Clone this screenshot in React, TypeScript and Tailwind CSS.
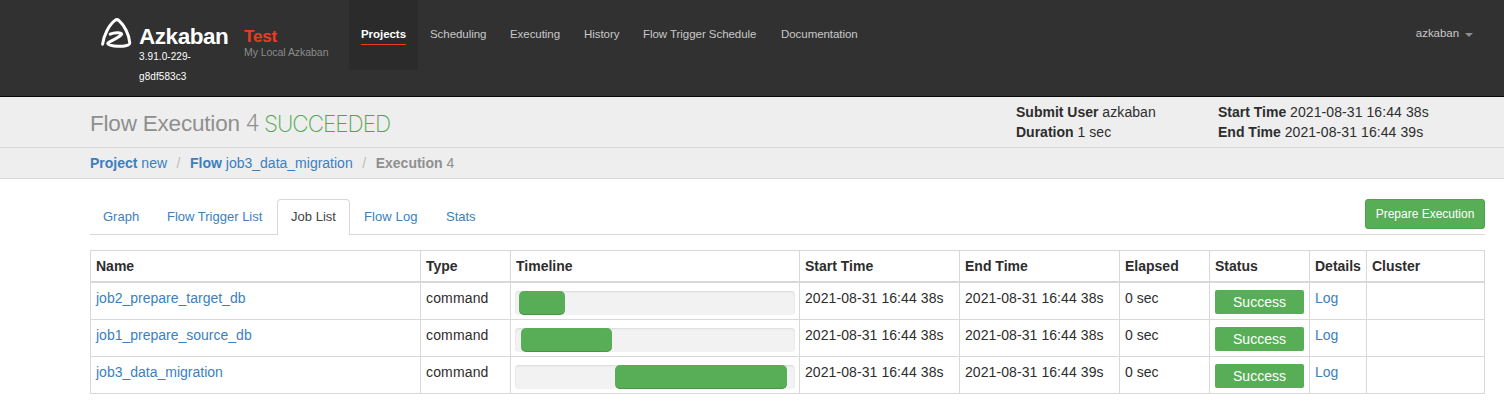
import React from 'react';

const columns = 'grid grid-cols-[330px_90px_289px_160px_160px_90px_100px_57px_118px]';
const cell = 'border-r border-b border-[#d8d8d8] px-[5px] whitespace-nowrap';

const navItems = [
  { label: 'Scheduling', width: 'w-[80px]' },
  { label: 'Executing', width: 'w-[74px]' },
  { label: 'History', width: 'w-[59px]' },
  { label: 'Flow Trigger Schedule', width: 'w-[138px]' },
  { label: 'Documentation', width: 'w-[100px]' },
];

const headings = ['Name', 'Type', 'Timeline', 'Start Time', 'End Time', 'Elapsed', 'Status', 'Details', 'Cluster'];

const jobs = [
  { name: 'job2_prepare_target_db', end: '2021-08-31 16:44 38s', offset: 4, width: 46 },
  { name: 'job1_prepare_source_db', end: '2021-08-31 16:44 38s', offset: 6, width: 91 },
  { name: 'job3_data_migration', end: '2021-08-31 16:44 39s', offset: 100, width: 172 },
];

function Logo() {
  return (
    <svg className="h-[34px] w-[36px] shrink-0" viewBox="99 15 36 34" fill="none" stroke="#fff" strokeLinecap="round" strokeLinejoin="round">
      <path
        d="M102.6 44.2C103.6 35.5 109 24.8 115 20.4Q117 18.8 119 20.6C124 25 129.3 34.5 129.8 43C129.7 45.6 123 46.5 118 46.3C113 46.1 107.6 45 107.8 43.2C108.6 41.2 120 38 121.6 34.2C121.4 32.2 114 32.6 110.2 34.2"
        strokeWidth="3"
      />
    </svg>
  );
}

function Navbar() {
  return (
    <nav className="flex h-[97px] border-b border-[#080808] bg-[#313131] pl-[99px] pr-[31px] text-[11.5px] tracking-[-0.05px] text-[#c8c8c8]">
      <div className="w-[39px] pt-[15px]">
        <Logo />
      </div>
      <div className="w-[106px] pt-[22px] text-white">
        <div className="pl-[1px] text-[22.5px] leading-[30px] font-bold tracking-[-0.45px]">Azkaban</div>
        <div className="-mt-[5px] w-[60px] pl-[1px] text-[10px] leading-[20px] tracking-[0.08px]">3.91.0-229-g8df583c3</div>
      </div>
      <div className="w-[105px] pt-[28px]">
        <div className="text-[17px] leading-[18px] font-bold tracking-[-0.2px] text-[#f03a20]">Test</div>
        <div className="text-[10.5px] leading-[13px] whitespace-nowrap text-[#8c8c8c]">My Local Azkaban</div>
      </div>
      <div className="h-[70px] w-[69px] bg-[#2b2b2b] pt-[25px] pl-[12px]">
        <span className="inline-block border-b border-[#f03a20] leading-[19px] font-bold text-white">Projects</span>
      </div>
      <div className="flex pt-[25px] pl-[12px] leading-[18px]">
        {navItems.map((item) => (
          <a key={item.label} className={`${item.width} whitespace-nowrap`}>
            {item.label}
          </a>
        ))}
      </div>
      <div className="mt-[25px] ml-auto flex h-[18px] items-center gap-[6px]">
        <span>azkaban</span>
        <span className="mt-[2px] border-x-4 border-t-4 border-x-transparent border-t-[#8c8c8c]" />
      </div>
    </nav>
  );
}

function Fact({ label, value }: { label: string; value: string }) {
  return (
    <div className="whitespace-nowrap">
      <b>{label}</b> <span className="tracking-[0.08px]">{value}</span>
    </div>
  );
}

function Header() {
  return (
    <header className="flex h-[51px] border-b border-[#d8d8d8] bg-[#eee] pl-[90px]">
      <h1 className="flex w-[926px] pt-[12px] text-[22.5px] leading-[30px] whitespace-nowrap text-[#8f8f8f]">
        <span className="w-[156px] tracking-[-0.2px]">Flow Execution</span>
        <span className="w-[18px] font-['Roboto'] text-[23px] font-light">4</span>
        <span className="font-['Inter'] font-extralight tracking-[-1px] text-[#4aa84a]">SUCCEEDED</span>
      </h1>
      <div className="w-[202px] pt-[5px] leading-[20px]">
        <Fact label="Submit User" value="azkaban" />
        <Fact label="Duration" value="1 sec" />
      </div>
      <div className="pt-[5px] leading-[20px]">
        <Fact label="Start Time" value="2021-08-31 16:44 38s" />
        <Fact label="End Time" value="2021-08-31 16:44 39s" />
      </div>
    </header>
  );
}

function Breadcrumb() {
  return (
    <div className="flex h-[31px] border-b border-[#d8d8d8] bg-[#eee] pl-[90px] leading-[30px] whitespace-nowrap text-[#3b7fc0]">
      <span><b>Project</b> new</span>
      <span className="w-[23px] text-center text-[#bbb]">/</span>
      <span><b>Flow</b> job3_data_migration</span>
      <span className="w-[23px] text-center text-[#bbb]">/</span>
      <span className="text-[#8f8f8f]"><b>Execution</b> 4</span>
    </div>
  );
}

function Tabs() {
  return (
    <div className="flex h-[36px] items-start border-b border-[#d8d8d8] text-[13px] leading-[35px] whitespace-nowrap text-[#3b7fc0]">
      <a className="w-[64px] pl-[13px]">Graph</a>
      <a className="w-[123px] pl-[13px]">Flow Trigger List</a>
      <a className="h-[36px] w-[73px] rounded-t-[4px] border border-b-0 border-[#d8d8d8] bg-white text-center leading-[34px] text-[#444]">Job List</a>
      <a className="w-[82px] pl-[14px] tracking-[0.1px]">Flow Log</a>
      <a className="pl-[14px]">Stats</a>
      <button className="ml-auto h-[30px] w-[120px] rounded-[3px] border border-[#4ba04b] bg-[#57ae57] text-[12px] leading-[28px] text-white">
        Prepare Execution
      </button>
    </div>
  );
}

function JobTable() {
  return (
    <div className="mt-[15px] border-t border-l border-[#d8d8d8]">
      <div className={`${columns} h-[32px] leading-[30px] font-bold`}>
        {headings.map((heading) => (
          <div key={heading} className="border-r border-b-2 border-[#d8d8d8] px-[5px] whitespace-nowrap">
            {heading}
          </div>
        ))}
      </div>
      {jobs.map((job) => (
        <div key={job.name} className={`${columns} h-[37px] leading-[31px]`}>
          <div className={`${cell} text-[#3b7fc0]`}>{job.name}</div>
          <div className={`${cell} tracking-[0.15px]`}>command</div>
          <div className="border-r border-b border-[#d8d8d8] px-[4px] pt-[8px]">
            <div className="h-[24px] rounded-[4px] bg-[#f2f2f2] shadow-[inset_0_1px_2px_rgba(0,0,0,0.1)]">
              <div
                className="h-[24px] rounded-[5px] bg-[#57ae57] shadow-[inset_0_-1px_0_rgba(0,0,0,0.15)]"
                style={{ marginLeft: job.offset, width: job.width }}
              />
            </div>
          </div>
          <div className={`${cell} tracking-[0.08px]`}>2021-08-31 16:44 38s</div>
          <div className={`${cell} tracking-[0.08px]`}>{job.end}</div>
          <div className={cell}>0 sec</div>
          <div className={`${cell} pt-[7px]`}>
            <div className="h-[24px] w-[89px] rounded-[2px] bg-[#57ae57] text-center leading-[24px] text-white">Success</div>
          </div>
          <div className={`${cell} text-[#3b7fc0]`}>Log</div>
          <div className={cell} />
        </div>
      ))}
    </div>
  );
}

export default function App() {
  return (
    <div className="h-[411px] w-[1504px] overflow-hidden bg-white font-['Liberation_Sans',sans-serif] text-[14px] text-[#2d2d2d]">
      <Navbar />
      <Header />
      <Breadcrumb />
      <main className="mt-[20px] ml-[90px] w-[1395px]">
        <Tabs />
        <JobTable />
      </main>
    </div>
  );
}
